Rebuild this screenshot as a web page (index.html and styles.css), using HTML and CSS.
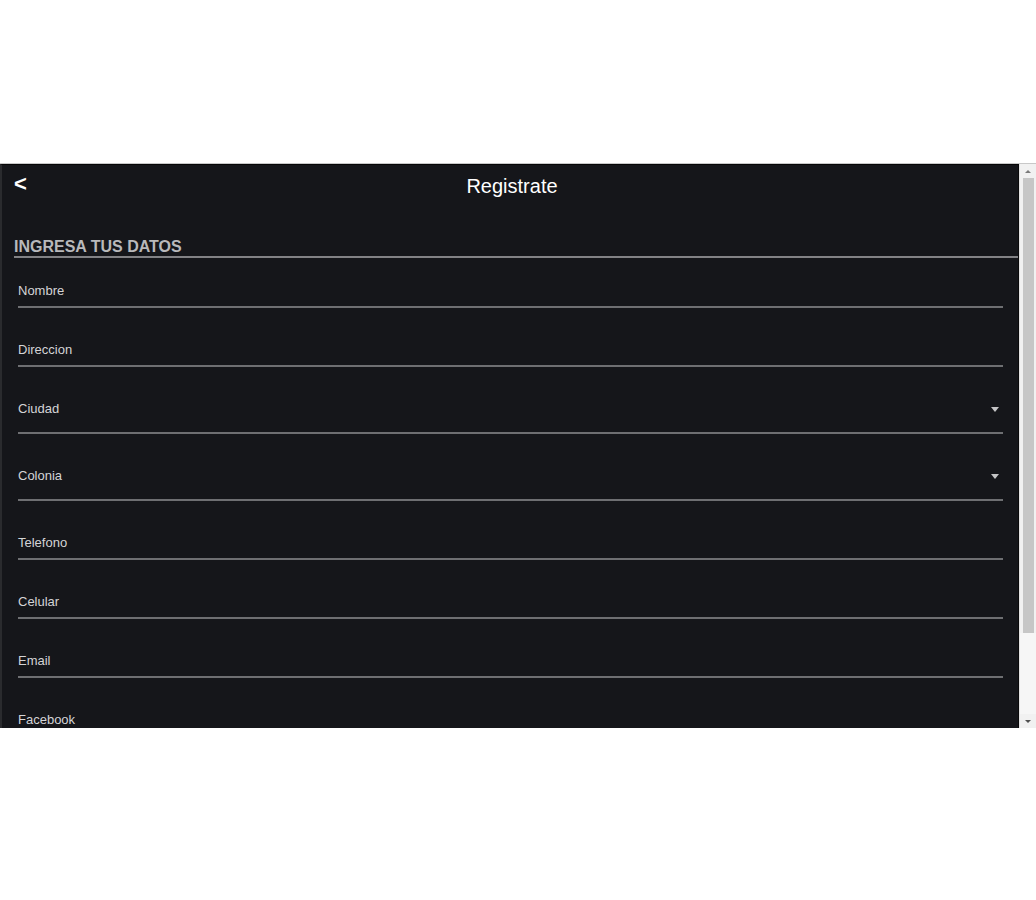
FILE: index.html
```html
<!DOCTYPE html>
<html lang="es">
  <head>
    <meta charset="utf-8" />
    <meta name="viewport" content="width=device-width, initial-scale=1" />
    <title>Registrate</title>
    <link rel="stylesheet" href="styles.css">
  </head>
  <body>
    <div class="frame">
      <div class="app">
        <header class="topbar">
          <span class="back">&lt;</span>
          <h1 class="title">Registrate</h1>
          <span></span>
        </header>
        <h2 class="section">INGRESA TUS DATOS</h2>
        <form class="form">
          <div class="field"><label>Nombre</label></div>
          <div class="field"><label>Direccion</label></div>
          <div class="field select"><label>Ciudad</label><span class="caret"></span></div>
          <div class="field select"><label>Colonia</label><span class="caret"></span></div>
          <div class="field"><label>Telefono</label></div>
          <div class="field"><label>Celular</label></div>
          <div class="field"><label>Email</label></div>
          <div class="field"><label>Facebook</label></div>
        </form>
      </div>
      <div class="scrollbar">
        <div class="sb-btn up"></div>
        <div class="sb-thumb"></div>
        <div class="sb-rest"></div>
        <div class="sb-btn down"></div>
      </div>
    </div>
  </body>
</html>
```

FILE: styles.css
```css
html,
body {
  margin: 0;
  background-color: #fff;
}

.frame {
  margin-top: 163px;
  height: 564px;
  display: flex;
  border-top: 1px solid #c8c8c8;
}

.app {
  flex: 1;
  overflow: hidden;
  background-color: #15161a;
  border-top: 1px solid #060607;
  border-left: 2px solid #2a2b2e;
  border-right: 1px solid #0a0a0b;
  font-family: "Liberation Sans", Arial, sans-serif;
}

.topbar {
  display: grid;
  grid-template-columns: 1fr auto 1fr;
  align-items: start;
  padding: 10px 8px 0 12px;
}

.back {
  margin-top: -2px;
  font-size: 22px;
  line-height: 22px;
  font-weight: bold;
  color: #fff;
}

.title {
  margin: 0;
  font-size: 20px;
  line-height: 23px;
  font-weight: normal;
  color: #fff;
}

.section {
  margin: 40px 0 0 12px;
  padding-bottom: 0;
  font-size: 16px;
  line-height: 18px;
  font-weight: bold;
  color: #b9b9bb;
  border-bottom: 2px solid #828285;
}

.form {
  margin: 0;
  padding: 0 15px 0 16px;
}

.field {
  display: flex;
  align-items: center;
  padding-top: 34px;
  border-bottom: 2px solid #6e6f72;
}

.field:first-child {
  padding-top: 25px;
}

.field label {
  flex: 1;
  margin-bottom: 7px;
  font-size: 13px;
  line-height: 16px;
  color: #d4d4d6;
}

.field.select label {
  margin-bottom: 15px;
}

.caret {
  margin: 0 4px 15px 0;
  width: 0;
  height: 0;
  border-left: 4px solid transparent;
  border-right: 4px solid transparent;
  border-top: 5px solid #c4c4c6;
}

.scrollbar {
  width: 16px;
  display: flex;
  flex-direction: column;
  background-color: #f1f1f1;
  border-left: 1px solid #e2e2e2;
}

.sb-btn {
  height: 14px;
  display: flex;
  align-items: center;
  justify-content: center;
}

.sb-btn::after {
  content: "";
  width: 0;
  height: 0;
  border-left: 3px solid transparent;
  border-right: 3px solid transparent;
}

.sb-btn.up::after {
  border-bottom: 3px solid #7a7a7a;
}

.sb-btn.down::after {
  border-top: 3px solid #505050;
}

.sb-thumb {
  height: 455px;
  margin: 0 2px 0 3px;
  background-color: #c6c6c6;
}

.sb-rest {
  flex: 1;
  background-color: #f6f6f6;
}
```
